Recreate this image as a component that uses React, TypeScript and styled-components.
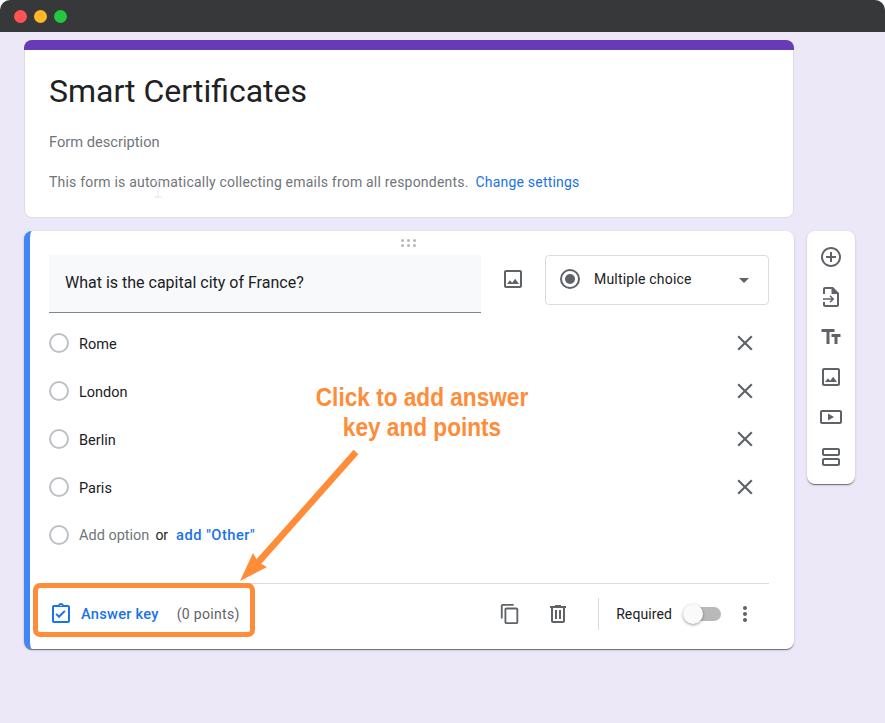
import * as React from 'react';
import styled, { createGlobalStyle } from 'styled-components';

const GlobalStyle = createGlobalStyle`
    html, body {
        margin: 0;
        padding: 0;
        background: #ffffff;
    }

    body {
        font-family: Roboto, "Liberation Sans", sans-serif;
    }
`;

const ICONS = {
    addCircle: 'M13 7h-2v4H7v2h4v4h2v-4h4v-2h-4V7zm-1-5C6.48 2 2 6.48 2 12s4.48 10 10 10 10-4.48 10-10S17.52 2 12 2zm0 18c-4.41 0-8-3.59-8-8s3.59-8 8-8 8 3.59 8 8-3.59 8-8 8z',
    importFile: 'M6 2h8l6 6v12c0 1.1-.9 2-2 2H6c-1.1 0-2-.9-2-2v-3h2v3h12V9h-5.500V4H6v5H4V4c0-1.1.9-2 2-2zM4 13.200h8.500l-2-2 1-1 3.800 3.800-3.800 3.800-1-1 2-2H4z',
    title: 'M2.500 4v3h5v12h3V7h5V4h-13zm19 5h-9v3h3v7h3v-7h3V9z',
    image: 'M19 5v14H5V5h14m0-2H5c-1.100 0-2 .9-2 2v14c0 1.100.9 2 2 2h14c1.100 0 2-.9 2-2V5c0-1.100-.9-2-2-2zm-4.860 8.860l-3 3.870L9 13.140 6 17h12l-3.860-5.140z',
    video: 'M21 5H3c-1.100 0-2 .9-2 2v10c0 1.100.9 2 2 2h18c1.100 0 2-.9 2-2V7c0-1.100-.9-2-2-2zm0 12H3V7h18v10zM9 8.500v7l6-3.500z',
    section: 'M19 13H5c-1.100 0-2 .9-2 2v4c0 1.100.9 2 2 2h14c1.100 0 2-.9 2-2v-4c0-1.100-.9-2-2-2zm0 6H5v-4h14v4zm0-16H5c-1.100 0-2 .9-2 2v4c0 1.100.9 2 2 2h14c1.100 0 2-.9 2-2V5c0-1.100-.9-2-2-2zm0 6H5V5h14v4z',
    close: 'M19 6.410L17.590 5 12 10.590 6.410 5 5 6.410 10.590 12 5 17.590 6.410 19 12 13.410 17.590 19 19 17.590 13.410 12z',
    copy: 'M16 1H4c-1.100 0-2 .9-2 2v14h2V3h12V1zm3 4H8c-1.100 0-2 .9-2 2v14c0 1.100.9 2 2 2h11c1.100 0 2-.9 2-2V7c0-1.100-.9-2-2-2zm0 16H8V7h11v14z',
    trash: 'M15 4V3H9v1H4v2h1v13c0 1.100.9 2 2 2h10c1.100 0 2-.9 2-2V6h1V4h-5zm2 15H7V6h10v13zM9 8h2v9H9zm4 0h2v9h-2z',
    more: 'M12 8c1.100 0 2-.9 2-2s-.9-2-2-2-2 .9-2 2 .9 2 2 2zm0 2c-1.100 0-2 .9-2 2s.9 2 2 2 2-.9 2-2-.9-2-2-2zm0 6c-1.100 0-2 .9-2 2s.9 2 2 2 2-.9 2-2-.9-2-2-2z',
    answerKey: 'M19 3h-4.180C14.400 1.840 13.300 1 12 1s-2.400.84-2.820 2H5c-1.100 0-2 .9-2 2v14c0 1.100.9 2 2 2h14c1.100 0 2-.9 2-2V5c0-1.100-.9-2-2-2zm-7-.25c.41 0 .75.34.75.75s-.34.75-.75.75-.75-.34-.75-.75.34-.75.75-.75zM19 19H5V5h14v14zm-2.420-9.420L15.170 8.170 10 13.340l-2.170-2.170-1.410 1.410L10 16.170z',
};

const Icon: React.FC<{ d: string; size?: number; color?: string }> = ({ d, size = 24, color = '#5f6368' }) => (
    <svg width={size} height={size} viewBox="0 0 24 24" fill={color}>
        <path d={d} />
    </svg>
);

const App: React.FC = () => {
    const options = ['Rome', 'London', 'Berlin', 'Paris'];
    const tools = [ICONS.addCircle, ICONS.importFile, ICONS.title, ICONS.image, ICONS.video, ICONS.section];

    return (
        <Screen>
            <GlobalStyle />
            <TitleBar>
                <Light color="#ff5252" />
                <Light color="#ffb62a" />
                <Light color="#22c63f" />
            </TitleBar>
            <Page>
                <Column>
                    <HeaderCard>
                        <HeaderBand />
                        <HeaderBody>
                            <FormTitle>Smart Certificates</FormTitle>
                            <FormDescription>Form description</FormDescription>
                            <Notice>
                                This form is automatically collecting emails from all respondents.
                                <NoticeLink>Change settings</NoticeLink>
                            </Notice>
                        </HeaderBody>
                    </HeaderCard>

                    <QuestionCard>
                        <DragHandle>
                            <svg width="16" height="8" viewBox="0 0 16 8" fill="#b4b6b9">
                                {[1.5, 7.5, 13.5].map((x) => (
                                    <React.Fragment key={x}>
                                        <circle cx={x} cy="1.5" r="1.5" />
                                        <circle cx={x} cy="6.5" r="1.5" />
                                    </React.Fragment>
                                ))}
                            </svg>
                        </DragHandle>
                        <QuestionHead>
                            <QuestionInput>What is the capital city of France?</QuestionInput>
                            <HeadIcon>
                                <Icon d={ICONS.image} />
                            </HeadIcon>
                            <TypeSelect>
                                <TypeRadio />
                                <TypeLabel>Multiple choice</TypeLabel>
                                <Caret />
                            </TypeSelect>
                        </QuestionHead>

                        <Options>
                            {options.map((option) => (
                                <OptionRow key={option}>
                                    <Radio />
                                    <OptionLabel>{option}</OptionLabel>
                                    <Icon d={ICONS.close} size={26} />
                                </OptionRow>
                            ))}
                            <OptionRow>
                                <Radio />
                                <AddOption>Add option</AddOption>
                                <OrText>or</OrText>
                                <AddOther>add "Other"</AddOther>
                            </OptionRow>
                        </Options>

                        <Footer>
                            <Icon d={ICONS.answerKey} color="#1a73e8" />
                            <AnswerKey>Answer key</AnswerKey>
                            <Points>(0 points)</Points>
                            <FooterActions>
                                <CopySlot>
                                    <Icon d={ICONS.copy} size={22} />
                                </CopySlot>
                                <ActionSlot>
                                    <Icon d={ICONS.trash} />
                                </ActionSlot>
                            </FooterActions>
                            <FooterDivider />
                            <RequiredLabel>Required</RequiredLabel>
                            <Toggle />
                            <MoreButton>
                                <Icon d={ICONS.more} />
                            </MoreButton>
                        </Footer>
                    </QuestionCard>
                </Column>

                <Toolbox>
                    {tools.map((d) => (
                        <Icon key={d} d={d} />
                    ))}
                </Toolbox>
            </Page>

            <TextCursor width="12" height="18" viewBox="0 0 12 18" fill="none" stroke="#e6e6ea" strokeWidth="1">
                <path d="M2 1h8M6 1v16M2 17h8" />
            </TextCursor>

            <Callout>
                <CalloutLine>Click to add answer</CalloutLine>
                <CalloutLine>key and points</CalloutLine>
            </Callout>
            <CalloutArrow width="885" height="723" viewBox="0 0 885 723">
                <path d="M356 452L254 567" stroke="#ff8c38" strokeWidth="6.5" fill="none" />
                <path d="M240 581L253 553L258 562L267 567Z" fill="#ff8c38" />
            </CalloutArrow>
            <CalloutBox />
        </Screen>
    );
};

const Screen = styled.div`
    position: relative;
    width: 885px;
    height: 723px;
    overflow: hidden;
    display: flex;
    flex-direction: column;
    border-radius: 10px 10px 0 0;
    background: #ede8f8;
`;

const TitleBar = styled.div`
    height: 32px;
    flex: none;
    display: flex;
    align-items: center;
    gap: 7px;
    padding: 1px 0 0 14px;
    box-sizing: border-box;
    background: #37383a;
`;

const Light = styled.span<{ color: string }>`
    width: 13px;
    height: 13px;
    border-radius: 50%;
    background: ${(props) => props.color};
`;

const Page = styled.div`
    display: flex;
    align-items: flex-start;
    gap: 13px;
    padding: 8px 0 0 24px;
`;

const Column = styled.div`
    width: 770px;
    display: flex;
    flex-direction: column;
    gap: 13px;
`;

const HeaderCard = styled.section`
    height: 178px;
    box-sizing: border-box;
    border-radius: 8px;
    overflow: hidden;
    background: #ffffff;
    box-shadow: 0 0 0 1px #dadce0 inset;
`;

const HeaderBand = styled.div`
    height: 10px;
    background: #673ab7;
`;

const HeaderBody = styled.div`
    display: flex;
    flex-direction: column;
    padding: 22px 25px 0;
`;

const FormTitle = styled.h1`
    margin: 0;
    font-size: 32px;
    font-weight: 400;
    line-height: 38px;
    color: #202124;
`;

const FormDescription = styled.p`
    margin: 22px 0 0;
    font-size: 14.67px;
    line-height: 20px;
    color: #70757a;
`;

const Notice = styled.p`
    margin: 20px 0 0;
    font-size: 14px;
    line-height: 20px;
    letter-spacing: 0.2px;
    color: #70757a;
`;

const NoticeLink = styled.span`
    margin-left: 7px;
    color: #1a73e8;
`;

const QuestionCard = styled.section`
    height: 418px;
    box-sizing: border-box;
    display: flex;
    flex-direction: column;
    padding: 0 25px 0 19px;
    border-left: 6px solid #4285f4;
    border-radius: 8px;
    background: #ffffff;
    box-shadow: 0 2px 1px -1px rgba(0, 0, 0, 0.35), 0 1px 1px rgba(0, 0, 0, 0.2), 0 1px 3px rgba(0, 0, 0, 0.14);
`;

const DragHandle = styled.div`
    height: 24px;
    flex: none;
    display: flex;
    justify-content: center;
    padding-top: 8px;
    box-sizing: border-box;
`;

const QuestionHead = styled.div`
    display: flex;
    align-items: flex-start;
`;

const QuestionInput = styled.div`
    width: 432px;
    height: 58px;
    box-sizing: border-box;
    display: flex;
    align-items: center;
    padding: 0 16px 2px;
    background: #f8f9fa;
    border-bottom: 1px solid #80868b;
    font-size: 16px;
    color: #202124;
`;

const HeadIcon = styled.div`
    width: 64px;
    height: 48px;
    display: flex;
    align-items: center;
    justify-content: center;
`;

const TypeSelect = styled.div`
    width: 224px;
    height: 50px;
    box-sizing: border-box;
    display: flex;
    align-items: center;
    padding: 0 19px 2px 14px;
    border: 1px solid #dadce0;
    border-radius: 4px;
`;

const TypeRadio = styled.span`
    position: relative;
    width: 20px;
    height: 20px;
    flex: none;
    box-sizing: border-box;
    border: 2px solid #5f6368;
    border-radius: 50%;

    &::after {
        content: '';
        position: absolute;
        inset: 3px;
        border-radius: 50%;
        background: #5f6368;
    }
`;

const TypeLabel = styled.span`
    flex: 1;
    margin-left: 14px;
    font-size: 14px;
    letter-spacing: 0.2px;
    color: #202124;
`;

const Caret = styled.span`
    width: 0;
    height: 0;
    margin-top: 2px;
    border-left: 5px solid transparent;
    border-right: 5px solid transparent;
    border-top: 5px solid #5f6368;
`;

const Options = styled.div`
    margin-top: 6px;
    display: flex;
    flex-direction: column;
`;

const OptionRow = styled.div`
    height: 48px;
    display: flex;
    align-items: center;
    padding-right: 11px;
`;

const Radio = styled.span`
    width: 20px;
    height: 20px;
    flex: none;
    box-sizing: border-box;
    border: 2px solid #bdc1c6;
    border-radius: 50%;
`;

const OptionLabel = styled.span`
    flex: 1;
    margin: 2px 0 0 10px;
    font-size: 14.5px;
    color: #202124;
`;

const AddOption = styled.span`
    margin-left: 10px;
    font-size: 14.5px;
    color: #70757a;
`;

const OrText = styled.span`
    margin-left: 6px;
    font-size: 14px;
    color: #202124;
`;

const AddOther = styled.span`
    margin-left: 8px;
    font-size: 14.67px;
    font-weight: 500;
    letter-spacing: 0.5px;
    color: #1a73e8;
`;

const Footer = styled.div`
    margin-top: 24px;
    height: 65px;
    box-sizing: border-box;
    display: flex;
    align-items: center;
    border-top: 1px solid #dadce0;
    padding: 0 12px 5px 0;
`;

const AnswerKey = styled.span`
    margin-left: 8px;
    font-size: 14.67px;
    font-weight: 500;
    letter-spacing: 0.25px;
    color: #1a73e8;
`;

const Points = styled.span`
    margin-left: 18px;
    font-size: 14px;
    letter-spacing: 0.3px;
    color: #5f6368;
`;

const FooterActions = styled.div`
    margin-left: auto;
    display: flex;
    gap: 25px;
`;

const ActionSlot = styled.span`
    width: 24px;
    height: 24px;
    display: flex;
    align-items: center;
    justify-content: center;
`;

const CopySlot = styled(ActionSlot)`
    box-sizing: border-box;
    padding: 1px 0 0 2px;
`;

const FooterDivider = styled.span`
    width: 1px;
    height: 32px;
    margin: 0 17px 0 28px;
    background: #dadce0;
`;

const RequiredLabel = styled.span`
    font-size: 14px;
    letter-spacing: 0.1px;
    color: #202124;
`;

const Toggle = styled.span`
    position: relative;
    width: 34px;
    height: 14px;
    margin-left: 15px;
    border-radius: 7px;
    background: #b9b9b9;

    &::before {
        content: '';
        position: absolute;
        left: -4px;
        top: -3px;
        width: 20px;
        height: 20px;
        border-radius: 50%;
        background: #fafafa;
        box-shadow: 0 1px 3px rgba(0, 0, 0, 0.4);
    }
`;

const MoreButton = styled.div`
    display: flex;
    margin-left: 12px;
`;

const Toolbox = styled.aside`
    width: 48px;
    height: 253px;
    margin-top: 191px;
    box-sizing: border-box;
    display: flex;
    flex-direction: column;
    align-items: center;
    gap: 16px;
    padding-top: 14px;
    border-radius: 8px;
    background: #ffffff;
    box-shadow: 0 2px 1px -1px rgba(0, 0, 0, 0.35), 0 1px 1px rgba(0, 0, 0, 0.2), 0 1px 3px rgba(0, 0, 0, 0.14);
`;

/* the cursor and the orange markup lie over the form */
const TextCursor = styled.svg`
    position: absolute;
    left: 152px;
    top: 180px;
`;

const Callout = styled.div`
    position: absolute;
    left: 272px;
    top: 382px;
    width: 300px;
    text-align: center;
    font-family: "Liberation Sans", Arial, sans-serif;
    font-weight: 700;
    color: #ff8c38;
`;

const CalloutLine = styled.div`
    font-size: 26px;
    line-height: 30px;
    transform: scaleX(0.87);
`;

const CalloutArrow = styled.svg`
    position: absolute;
    left: 0;
    top: 0;
    pointer-events: none;
`;

const CalloutBox = styled.div`
    position: absolute;
    left: 33px;
    top: 583px;
    width: 222px;
    height: 54px;
    box-sizing: border-box;
    border: 5px solid #ff8c38;
    border-radius: 7px;
`;

export default App;
